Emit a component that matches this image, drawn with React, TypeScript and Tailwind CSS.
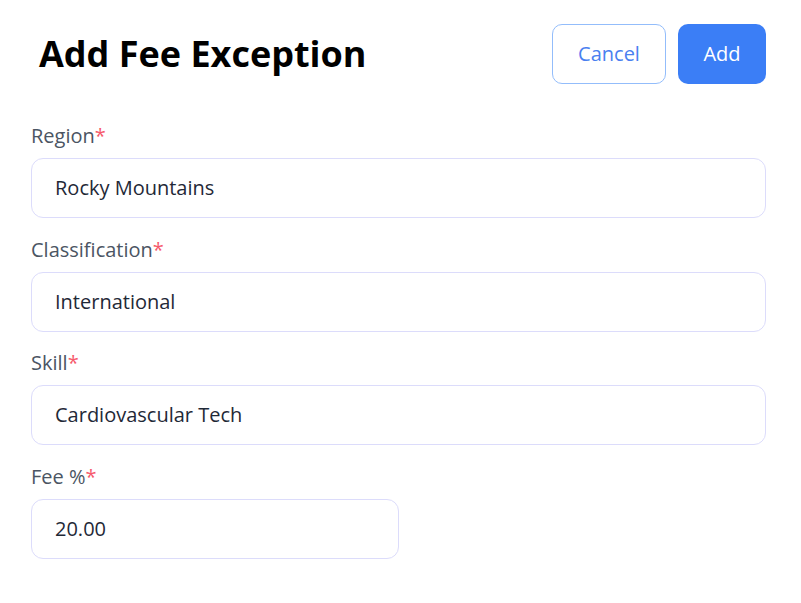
const fields = [
  { label: "Region", value: "Rocky Mountains", half: false },
  { label: "Classification", value: "International", half: false },
  { label: "Skill", value: "Cardiovascular Tech", half: false },
  { label: "Fee %", value: "20.00", half: true },
];

export default function App() {
  return (
    <div
      className="min-h-[603px] bg-white pl-[31px] pr-[35px] pt-[24px]"
      style={{ fontFamily: '"Open Sans", "Noto Sans", sans-serif' }}
    >
      {/* Header */}
      <div className="flex items-center justify-between">
        <h1 className="pl-[8px] text-[36px] font-bold leading-none text-black">
          Add Fee Exception
        </h1>
        <div className="flex gap-[12px]">
          <button className="h-[60px] w-[114px] rounded-[10px] border border-[#93bdfb] bg-white text-[20px] text-[#4a80f0]">
            Cancel
          </button>
          <button className="h-[60px] w-[88px] rounded-[10px] bg-[#3b7ef6] text-[20px] text-white">
            Add
          </button>
        </div>
      </div>

      {/* Form */}
      <div className="mt-[38px] flex flex-col gap-[17.5px]">
        {fields.map((f) => (
          <div key={f.label} className="flex flex-col gap-[8px]">
            <label className="text-[20px] leading-[28px] text-[#4b5563]">
              {f.label}
              <span className="text-[#f65a6c]">*</span>
            </label>
            <div
              className={
                f.half
                  ? "flex h-[60px] w-[368px] items-center rounded-[12px] border border-[#dcdcfb] px-[23px]"
                  : "flex h-[60px] w-full items-center rounded-[12px] border border-[#dcdcfb] px-[23px]"
              }
            >
              <span className="text-[20px] text-[#1f2937]">{f.value}</span>
            </div>
          </div>
        ))}
      </div>
    </div>
  );
}
